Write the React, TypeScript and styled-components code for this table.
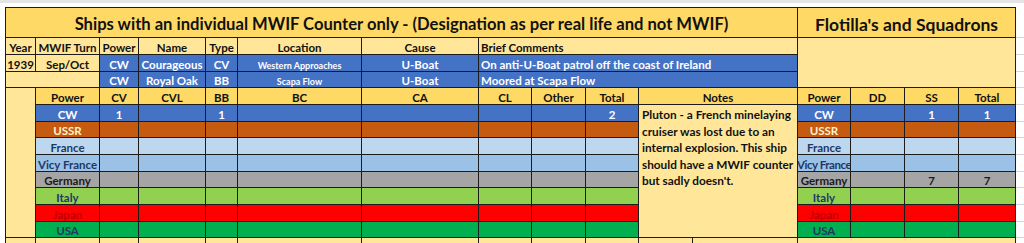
import React from "react";
import styled, { createGlobalStyle } from "styled-components";

const GOLD = "#FFD966";
const GOLD_LIGHT = "#FFE699";
const BLUE = "#4472C4";
const LINE = "#1c1c1c";

const Global = createGlobalStyle`
  html, body { margin: 0; padding: 0; background: #ffffff; overflow: hidden; }
  body { font-family: Lato, "Open Sans", "Liberation Sans", sans-serif; }
`;

const Page = styled.div`
  width: 1024px;
  height: 243px;
  overflow: hidden;
  display: flex;
  flex-direction: column;
`;

const TopStrip = styled.div`
  height: 7px;
  border-top: 3px solid #e4e4e4;
  box-sizing: border-box;
  flex: none;
`;

const Body = styled.div`
  display: flex;
  padding-left: 5px;
`;

const Sheet = styled.div`
  display: grid;
  grid-template-columns: 30px 64px 39px 67px 32px 124px 117px 53px 54px 53px 54px 105px 53px 54px 54px 57px;
  grid-template-rows: 30px 17px 17px 16px 17px 17px 16px 17px 17px 16px 17px 17px 16px 17px;
  border-top: 1px solid ${LINE};
  border-left: 1px solid ${LINE};
  flex: none;
`;

const Cell = styled.div<{
  $col: string;
  $row: string;
  $bg?: string;
  $fg?: string;
  $align?: "left" | "center";
  $size?: number;
  $tight?: boolean;
}>`
  grid-column: ${(p) => p.$col};
  grid-row: ${(p) => p.$row};
  background: ${(p) => p.$bg ?? GOLD_LIGHT};
  color: ${(p) => p.$fg ?? "#111"};
  border-right: 1px solid ${LINE};
  border-bottom: 1px solid ${LINE};
  box-sizing: border-box;
  display: flex;
  align-items: flex-end;
  justify-content: ${(p) => (p.$align === "left" ? "flex-start" : "center")};
  padding: ${(p) => (p.$tight ? "0 0 1px" : "0 2px 1px")};
  font-size: ${(p) => p.$size ?? 11.5}px;
  letter-spacing: ${(p) => (p.$tight ? "-0.45px" : "0")};
  font-weight: 700;
  line-height: 1;
  white-space: nowrap;
  overflow: hidden;
`;

const TitleCell = styled(Cell)`
  padding-bottom: 4px;
`;

const NotesCell = styled.div`
  grid-column: 11 / 13;
  grid-row: 6 / 14;
  background: ${GOLD_LIGHT};
  border-right: 1px solid ${LINE};
  border-bottom: 1px solid ${LINE};
  box-sizing: border-box;
  padding: 2px 3px 0;
  font-size: 11.8px;
  font-weight: 700;
  line-height: 16.6px;
  color: #111;
`;

const Filler = styled.div`
  flex: 1;
  display: flex;
  flex-direction: column;
`;

const FillerRow = styled.div<{ $h: number }>`
  height: ${(p) => p.$h}px;
  border-bottom: 1px solid #d6d6d6;
  box-sizing: border-box;
`;

const ROWS = [31, 17, 17, 16, 17, 17, 16, 17, 17, 16, 17, 17, 16, 17];

type Country = {
  name: string;
  bg: string;
  fg: string;
  vals: string[];
  flot: string[];
};

const countries: Country[] = [
  { name: "CW", bg: BLUE, fg: "#ffffff", vals: ["1", "", "1", "", "", "", "", "2"], flot: ["", "1", "1"] },
  { name: "USSR", bg: "#C55A11", fg: "#FFF2CC", vals: [], flot: [] },
  { name: "France", bg: "#BDD7EE", fg: "#1F3864", vals: [], flot: [] },
  { name: "Vicy France", bg: "#9BC2E6", fg: "#1F3864", vals: [], flot: [] },
  { name: "Germany", bg: "#A5A5A5", fg: "#1a1a1a", vals: [], flot: ["", "7", "7"] },
  { name: "Italy", bg: "#92D050", fg: "#1F3864", vals: [], flot: [] },
  { name: "Japan", bg: "#FF0000", fg: "#C00000", vals: [], flot: [] },
  { name: "USA", bg: "#00B050", fg: "#1F3864", vals: [], flot: [] },
];

const lowerHeads = ["CV", "CVL", "BB", "BC", "CA", "CL", "Other", "Total"];
const flotHeads = ["DD", "SS", "Total"];

type Loss = {
  year: string;
  turn: string;
  power: string;
  name: string;
  type: string;
  location: string;
  cause: string;
  comment: string;
};

const losses: Loss[] = [
  {
    year: "1939",
    turn: "Sep/Oct",
    power: "CW",
    name: "Courageous",
    type: "CV",
    location: "Western Approaches",
    cause: "U-Boat",
    comment: "On anti-U-Boat patrol off the coast of Ireland",
  },
  {
    year: "",
    turn: "",
    power: "CW",
    name: "Royal Oak",
    type: "BB",
    location: "Scapa Flow",
    cause: "U-Boat",
    comment: "Moored at Scapa Flow",
  },
];

export default function App() {
  return (
    <Page>
      <Global />
      <TopStrip />
      <Body>
        <Sheet>
          <TitleCell $col="1 / 13" $row="1" $bg={GOLD} $size={16.6}>
            Ships with an individual MWIF Counter only - (Designation as per real life and not MWIF)
          </TitleCell>
          <TitleCell $col="13 / 17" $row="1" $bg={GOLD} $size={17.5}>
            Flotilla's and Squadrons
          </TitleCell>

          <Cell $col="1" $row="2">Year</Cell>
          <Cell $col="2" $row="2">MWIF Turn</Cell>
          <Cell $col="3" $row="2">Power</Cell>
          <Cell $col="4" $row="2">Name</Cell>
          <Cell $col="5" $row="2">Type</Cell>
          <Cell $col="6" $row="2">Location</Cell>
          <Cell $col="7" $row="2">Cause</Cell>
          <Cell $col="8 / 13" $row="2" $align="left">Brief Comments</Cell>
          <Cell $col="13 / 17" $row="2 / 5" />

          {losses.map((l, i) => {
            const r = String(3 + i);
            return (
              <React.Fragment key={i}>
                {l.year ? (
                  <>
                    <Cell $col="1" $row={r}>{l.year}</Cell>
                    <Cell $col="2" $row={r}>{l.turn}</Cell>
                  </>
                ) : (
                  <Cell $col="1 / 3" $row={r} />
                )}
                <Cell $col="3" $row={r} $bg={BLUE} $fg="#fff">{l.power}</Cell>
                <Cell $col="4" $row={r} $bg={BLUE} $fg="#fff">{l.name}</Cell>
                <Cell $col="5" $row={r} $bg={BLUE} $fg="#fff">{l.type}</Cell>
                <Cell $col="6" $row={r} $bg={BLUE} $fg="#fff" $size={9}>{l.location}</Cell>
                <Cell $col="7" $row={r} $bg={BLUE} $fg="#fff">{l.cause}</Cell>
                <Cell $col="8 / 13" $row={r} $bg={BLUE} $fg="#fff" $align="left">{l.comment}</Cell>
              </React.Fragment>
            );
          })}

          <Cell $col="1" $row="5 / 14" />
          <Cell $col="2" $row="5" $bg={GOLD}>Power</Cell>
          {lowerHeads.map((h, i) => (
            <Cell key={h} $col={String(3 + i)} $row="5" $bg={GOLD}>{h}</Cell>
          ))}
          <Cell $col="11 / 13" $row="5" $bg={GOLD}>Notes</Cell>
          <Cell $col="13" $row="5" $bg={GOLD}>Power</Cell>
          {flotHeads.map((h, i) => (
            <Cell key={"f" + h} $col={String(14 + i)} $row="5" $bg={GOLD}>{h}</Cell>
          ))}

          {countries.map((c, i) => {
            const r = String(6 + i);
            return (
              <React.Fragment key={c.name}>
                <Cell $col="2" $row={r} $bg={c.bg} $fg={c.fg}>{c.name}</Cell>
                {lowerHeads.map((h, j) => (
                  <Cell key={h} $col={String(3 + j)} $row={r} $bg={c.bg} $fg={c.fg}>
                    {c.vals[j] ?? ""}
                  </Cell>
                ))}
                <Cell $col="13" $row={r} $bg={c.bg} $fg={c.fg} $tight={c.name.length > 8}>
                  {c.name}
                </Cell>
                {flotHeads.map((h, j) => (
                  <Cell key={"f" + h} $col={String(14 + j)} $row={r} $bg={c.bg} $fg={c.fg}>
                    {c.flot[j] ?? ""}
                  </Cell>
                ))}
              </React.Fragment>
            );
          })}

          <NotesCell>
            Pluton - a French minelaying cruiser was lost due to an internal explosion. This ship should have a MWIF
            counter but sadly doesn't.
          </NotesCell>

          {Array.from({ length: 12 }, (_, i) => (
            <Cell key={"b" + i} $col={String(1 + i)} $row="14" />
          ))}
          <Cell $col="13 / 17" $row="14" />
        </Sheet>
        <Filler>
          {ROWS.map((h, i) => (
            <FillerRow key={i} $h={h} />
          ))}
        </Filler>
      </Body>
    </Page>
  );
}
